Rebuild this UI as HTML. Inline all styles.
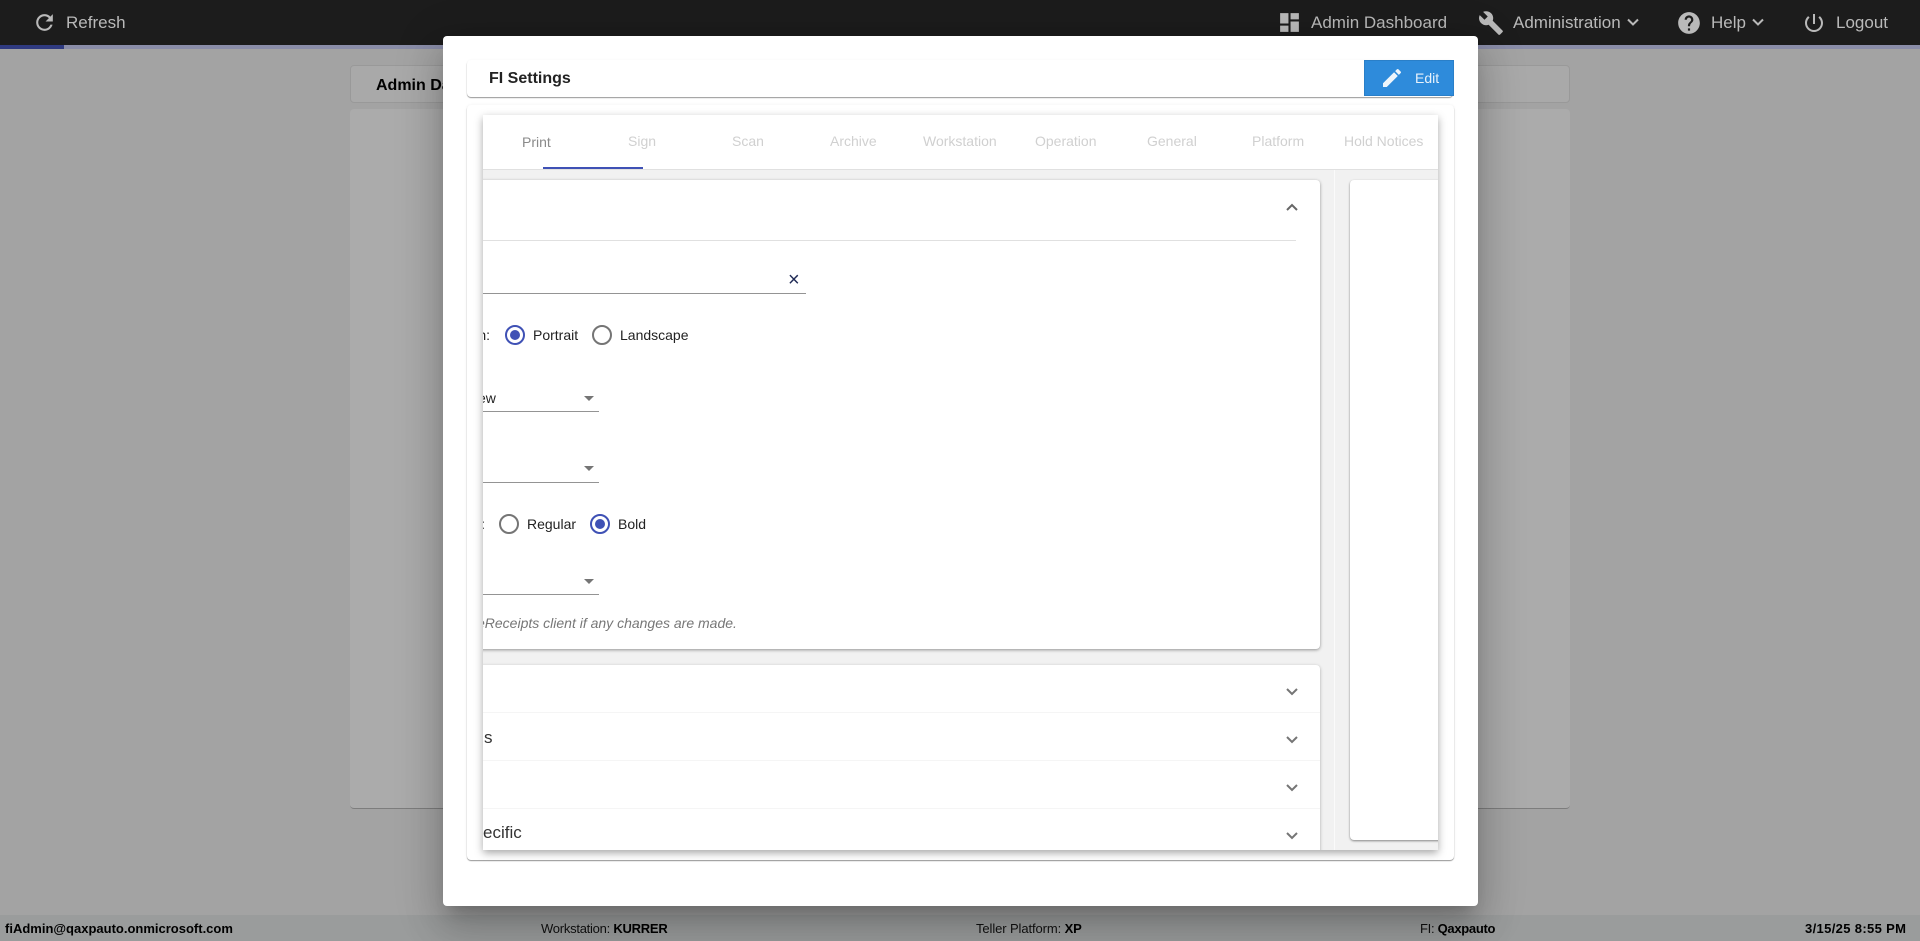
<!DOCTYPE html>
<html lang="en"><head><meta charset="utf-8"><title>FI Settings</title>
<style>
html,body{margin:0;padding:0;width:1920px;height:941px;overflow:hidden;background:#a3a3a3;font-family:"Liberation Sans",sans-serif}
div,span,svg{position:absolute;box-sizing:border-box}
span.b{position:static;font-weight:700;color:#000}
.t{white-space:nowrap;line-height:20px}
.h{color:#b9b9b9;font-size:17px;top:13px}
.f{font-size:13px;top:919px;color:#111;white-space:nowrap;line-height:20px}
.tab{font-size:14px;top:131px;color:#d0d0d0}
.r{font-size:14px;color:#222}
.rad{width:20px;height:20px;border-radius:50%;border:2px solid #757575}
.rad.on{border-color:#3f51b5}
.rad.on:after{content:"";position:absolute;left:3px;top:3px;width:10px;height:10px;border-radius:50%;background:#3f51b5}
.ul{height:1px;background:#949494;left:0}
.arr{width:0;height:0;border-left:5px solid transparent;border-right:5px solid transparent;border-top:5px solid #757575}
.sep{left:0;width:837px;height:1px;background:#f5f5f5}
</style></head><body>

<div style="left:0;top:0;width:1920px;height:45px;background:#1c1c1c"></div>
<div style="left:0;top:45px;width:1920px;height:4px;background:#8a8da8"></div>
<div style="left:0;top:45px;width:64px;height:4px;background:#2f3a80"></div>

<svg style="left:32px;top:10px" width="25" height="25" viewBox="0 0 24 24" fill="#b9b9b9"><path d="M17.65 6.35C16.2 4.9 14.21 4 12 4c-4.42 0-7.99 3.58-7.99 8s3.57 8 7.99 8c3.73 0 6.84-2.55 7.73-6h-2.08c-.82 2.33-3.04 4-5.65 4-3.31 0-6-2.69-6-6s2.69-6 6-6c1.66 0 3.14.69 4.22 1.78L13 11h7V4l-2.35 2.35z"/></svg>
<div class="t h" style="left:66px">Refresh</div>
<svg style="left:1277px;top:10px" width="25" height="25" viewBox="0 0 24 24" fill="#b9b9b9"><path d="M3 13h8V3H3v10zm0 8h8v-6H3v6zm10 0h8V11h-8v10zm0-18v6h8V3h-8z"/></svg>
<div class="t h" style="left:1311px">Admin Dashboard</div>
<svg style="left:1478px;top:10px" width="26" height="26" viewBox="0 0 24 24" fill="#b9b9b9"><path d="M22.7 19l-9.1-9.1c.9-2.3.4-5-1.5-6.9-2-2-5-2.4-7.4-1.3L9 6 6 9 1.6 4.7C.4 7.1.9 10.1 2.9 12.1c1.9 1.9 4.6 2.4 6.9 1.5l9.1 9.1c.4.4 1 .4 1.4 0l2.3-2.3c.5-.4.5-1.1.1-1.4z"/></svg>
<div class="t h" style="left:1513px">Administration</div>
<svg style="left:1627px;top:18px" width="12" height="9" viewBox="0 0 12 9" fill="none" stroke="#b9b9b9" stroke-width="2"><path d="M1 1.5l5 5 5-5"/></svg>
<svg style="left:1676px;top:10px" width="26" height="26" viewBox="0 0 24 24" fill="#b9b9b9"><path d="M12 2C6.48 2 2 6.48 2 12s4.48 10 10 10 10-4.48 10-10S17.52 2 12 2zm1 17h-2v-2h2v2zm2.07-7.75l-.9.92C13.45 12.9 13 13.5 13 15h-2v-.5c0-1.1.45-2.1 1.17-2.83l1.24-1.26c.37-.36.59-.86.59-1.41 0-1.1-.9-2-2-2s-2 .9-2 2H8c0-2.21 1.79-4 4-4s4 1.79 4 4c0 .88-.36 1.68-.93 2.25z"/></svg>
<div class="t h" style="left:1711px">Help</div>
<svg style="left:1752px;top:18px" width="12" height="9" viewBox="0 0 12 9" fill="none" stroke="#b9b9b9" stroke-width="2"><path d="M1 1.5l5 5 5-5"/></svg>
<svg style="left:1802px;top:11px" width="24" height="24" viewBox="0 0 24 24" fill="#b9b9b9"><path d="M13 3h-2v10h2V3zm4.83 2.17l-1.42 1.42C17.99 7.86 19 9.81 19 12c0 3.87-3.13 7-7 7s-7-3.13-7-7c0-2.19 1.01-4.14 2.58-5.42L6.17 5.17C4.23 6.82 3 9.26 3 12c0 4.97 4.03 9 9 9s9-4.03 9-9c0-2.74-1.23-5.18-3.17-6.83z"/></svg>
<div class="t h" style="left:1836px">Logout</div>

<div style="left:350px;top:65px;width:1220px;height:38px;background:#a9a9a9;border:1px solid #999;border-radius:4px"></div>
<div class="t" style="left:376px;top:76px;font-size:16px;font-weight:700;color:#000">Admin Dashboard</div>
<div style="left:350px;top:109px;width:1220px;height:700px;background:#ababab;border-radius:4px;border-bottom:1px solid #7d7d7d"></div>

<div style="left:0;top:915px;width:1920px;height:26px;background:#9a9c9c"></div>
<div class="f" style="left:5px;font-weight:700;color:#000">fiAdmin@qaxpauto.onmicrosoft.com</div>
<div class="f" style="left:541px;letter-spacing:-.25px">Workstation: <span class="b">KURRER</span></div>
<div class="f" style="left:976px;letter-spacing:-.1px">Teller Platform: <span class="b">XP</span></div>
<div class="f" style="left:1420px;letter-spacing:-.3px">FI: <span class="b">Qaxpauto</span></div>
<div class="f" style="left:1805px;font-weight:700;color:#000;letter-spacing:.35px">3/15/25 8:55 PM</div>

<div style="left:443px;top:36px;width:1035px;height:870px;background:#fff;border-radius:4px;box-shadow:0 11px 15px -7px rgba(0,0,0,.2),0 24px 38px 3px rgba(0,0,0,.14),0 9px 46px 8px rgba(0,0,0,.12)"></div>

<div style="left:467px;top:60px;width:986px;height:37px;background:#fff;border-radius:4px;box-shadow:0 1px 1px rgba(0,0,0,.4),0 0 2px rgba(0,0,0,.04)"></div>
<div class="t" style="left:489px;top:67px;font-size:16px;font-weight:700;color:#222;margin-top:2px">FI Settings</div>
<div style="left:1364px;top:60px;width:90px;height:36px;background:#2e8bdb;border:1px solid #2a7fc8"></div>
<svg style="left:1380px;top:66px" width="24" height="24" viewBox="0 0 24 24" fill="#eef5fb"><path d="M3 17.25V21h3.75L17.81 9.94l-3.75-3.75L3 17.25zM20.71 7.04c.39-.39.39-1.02 0-1.41l-2.34-2.34c-.39-.39-1.02-.39-1.41 0l-1.83 1.83 3.75 3.75 1.83-1.83z"/></svg>
<div class="t" style="left:1415px;top:68px;font-size:14px;color:#e8f2fb">Edit</div>

<div style="left:467px;top:105px;width:987px;height:755px;background:#fff;border-radius:4px;box-shadow:0 1px 1px rgba(0,0,0,.4),0 0 3px rgba(0,0,0,.06)"></div>

<div style="left:483px;top:115px;width:955px;height:735px;background:#f1f1f1;box-shadow:0 3px 8px rgba(0,0,0,.35)"></div>
<div style="left:483px;top:115px;width:955px;height:735px;overflow:hidden">
  <div style="left:0;top:0;width:955px;height:54px;background:#fff"></div>
  <div style="left:0;top:54px;width:955px;height:1px;background:#e0e0e0"></div>
  <div style="left:60px;top:52px;width:100px;height:2px;background:#3f51b5"></div>
  <div style="left:851px;top:55px;width:1px;height:680px;background:#fafafa"></div>

  <div style="left:-20px;top:65px;width:857px;height:469px;background:#fff;border-radius:4px;box-shadow:0 1px 3px rgba(0,0,0,.4)"></div>
  <div style="left:0;top:125px;width:813px;height:1px;background:#e0e0e0"></div>
  <svg style="left:803px;top:88px" width="12" height="10" viewBox="0 0 12 10" fill="none" stroke="#666" stroke-width="2"><path d="M1 7l5-5 5 5"/></svg>

  <div class="ul" style="top:178px;width:323px"></div>
  <div class="t" style="left:305px;top:155px;font-size:20px;color:#1f2a55">×</div>

  <div class="t r" style="right:948px;top:210px">n:</div>
  <div class="rad on" style="left:22px;top:210px"></div>
  <div class="t r" style="left:50px;top:210px">Portrait</div>
  <div class="rad" style="left:109px;top:210px"></div>
  <div class="t r" style="left:137px;top:210px">Landscape</div>

  <div class="t r" style="left:-5px;top:273px">ew</div>
  <div class="ul" style="top:296px;width:116px"></div>
  <div class="arr" style="left:101px;top:281px"></div>

  <div class="ul" style="top:367px;width:116px"></div>
  <div class="arr" style="left:101px;top:351px"></div>

  <div class="t r" style="right:953px;top:399px">t:</div>
  <div class="rad" style="left:16px;top:399px"></div>
  <div class="t r" style="left:44px;top:399px">Regular</div>
  <div class="rad on" style="left:107px;top:399px"></div>
  <div class="t r" style="left:135px;top:399px">Bold</div>

  <div class="ul" style="top:479px;width:116px"></div>
  <div class="arr" style="left:101px;top:464px"></div>

  <div class="t" style="left:-6px;top:498px;font-size:14px;font-style:italic;color:#777">eReceipts client if any changes are made.</div>

  <div style="left:-20px;top:550px;width:857px;height:200px;background:#fff;border-radius:4px;box-shadow:0 1px 3px rgba(0,0,0,.3)"></div>
  <div class="sep" style="top:597px"></div>
  <div class="sep" style="top:645px"></div>
  <div class="sep" style="top:693px"></div>
  <div class="t" style="left:1px;top:613px;font-size:17px;color:#333">s</div>
  <div class="t" style="left:0;top:708px;font-size:17px;color:#333">ecific</div>
  <svg style="left:803px;top:572px" width="12" height="10" viewBox="0 0 12 10" fill="none" stroke="#757575" stroke-width="2"><path d="M1 2l5 5 5-5"/></svg>
  <svg style="left:803px;top:620px" width="12" height="10" viewBox="0 0 12 10" fill="none" stroke="#757575" stroke-width="2"><path d="M1 2l5 5 5-5"/></svg>
  <svg style="left:803px;top:668px" width="12" height="10" viewBox="0 0 12 10" fill="none" stroke="#757575" stroke-width="2"><path d="M1 2l5 5 5-5"/></svg>
  <svg style="left:803px;top:716px" width="12" height="10" viewBox="0 0 12 10" fill="none" stroke="#757575" stroke-width="2"><path d="M1 2l5 5 5-5"/></svg>

  <div style="left:867px;top:65px;width:120px;height:660px;background:#fff;border-radius:4px;box-shadow:0 1px 2px rgba(0,0,0,.45)"></div>

  <div class="t tab" style="left:39px;top:17px;color:#8a8a8a">Print</div>
  <div class="t tab" style="left:145px;top:16px">Sign</div>
  <div class="t tab" style="left:249px;top:16px">Scan</div>
  <div class="t tab" style="left:347px;top:16px">Archive</div>
  <div class="t tab" style="left:440px;top:16px">Workstation</div>
  <div class="t tab" style="left:552px;top:16px">Operation</div>
  <div class="t tab" style="left:664px;top:16px">General</div>
  <div class="t tab" style="left:769px;top:16px">Platform</div>
  <div class="t tab" style="left:861px;top:16px">Hold Notices</div>
</div>
</body></html>
